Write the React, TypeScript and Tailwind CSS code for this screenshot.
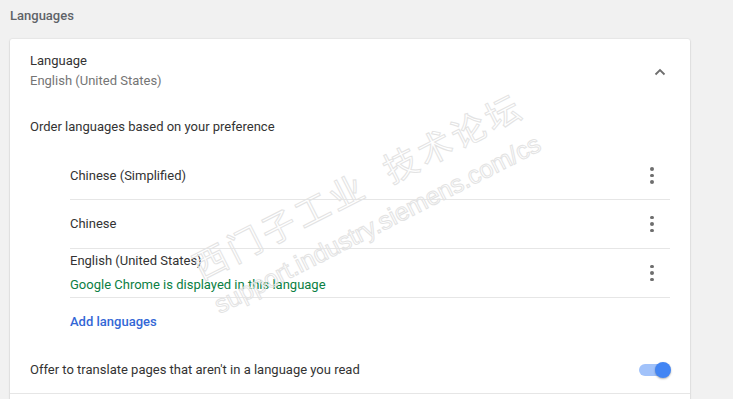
import React from "react";

function Kebab() {
  return (
    <div className="flex flex-col items-center gap-[3px] w-[6px]">
      <span className="block w-[3.5px] h-[3.5px] rounded-full bg-[#6e6e6e]" />
      <span className="block w-[3.5px] h-[3.5px] rounded-full bg-[#6e6e6e]" />
      <span className="block w-[3.5px] h-[3.5px] rounded-full bg-[#6e6e6e]" />
    </div>
  );
}

export default function App() {
  return (
    <div className="relative w-[733px] h-[399px] overflow-hidden bg-[#f1f1f1] font-['Roboto','Liberation_Sans',sans-serif] text-[13px]">
      <div className="pl-[10px] pt-[6px] h-[39px] leading-[20px] text-[#5f6368] font-medium">Languages</div>
      <div className="ml-[10px] w-[680px] bg-white rounded-[2px] shadow-[0_0_2px_rgba(0,0,0,0.14),0_1px_2px_rgba(0,0,0,0.12)] h-[400px]">
        <div className="flex items-center pl-[20px] pr-[24px] pt-[12px]">
          <div className="flex-1">
            <div className="leading-[20px] text-[#333]">Language</div>
            <div className="leading-[20px] text-[#757575]">English (United States)</div>
          </div>
          <svg width="12" height="8" viewBox="0 0 12 8" className="mt-[1px]">
            <path d="M1.5 6.5 L6 2 L10.5 6.5" fill="none" stroke="#6e6e6e" strokeWidth="1.8" />
          </svg>
        </div>
        <div className="pl-[20px] mt-[26px] leading-[20px] text-[#333]">Order languages based on your preference</div>
        <div className="ml-[60px] mr-[20px] mt-[15px]">
          <div className="flex items-center h-[48px] border-b border-[#e6e6e6] text-[#333]">
            <div className="flex-1">Chinese (Simplified)</div>
            <div className="mr-[15px]"><Kebab /></div>
          </div>
          <div className="flex items-center h-[49px] border-b border-[#e6e6e6] text-[#333]">
            <div className="flex-1">Chinese</div>
            <div className="mr-[15px]"><Kebab /></div>
          </div>
          <div className="flex items-center h-[49px] border-b border-[#e6e6e6]">
            <div className="flex-1">
              <div className="leading-[24px] text-[#333]">English (United States)</div>
              <div className="leading-[24px] text-[#0b8043]">Google Chrome is displayed in this language</div>
            </div>
            <div className="mr-[15px]"><Kebab /></div>
          </div>
          <div className="flex items-center h-[48px] text-[#3367d6] font-medium">Add languages</div>
        </div>
        <div className="flex items-center h-[48px] pl-[20px] pr-[20px] border-b border-[#e6e6e6] text-[#333]">
          <div className="flex-1">Offer to translate pages that aren't in a language you read</div>
          <div className="relative w-[32px] h-[16px] mr-[-1px]">
            <div className="absolute left-[0px] top-[2px] w-[28px] h-[12px] rounded-full bg-[#a1c2fa]" />
            <div className="absolute right-[0px] top-[0px] w-[16px] h-[16px] rounded-full bg-[#4285f4] shadow-[0_1px_2px_rgba(0,0,0,0.3)]" />
          </div>
        </div>
      </div>
      <div className="pointer-events-none absolute left-[195px] top-[251px] origin-left -rotate-[27deg] text-[34px] leading-none font-['Noto_Sans_CJK_SC',sans-serif] text-transparent [-webkit-text-stroke:1px_#e3e3e3] tracking-[4px] whitespace-nowrap">
        西门子工业&nbsp;&nbsp;技术论坛
      </div>
      <div className="pointer-events-none absolute left-[216px] top-[294px] origin-left -rotate-[27deg] text-[25px] leading-none font-['Liberation_Sans',sans-serif] text-transparent [-webkit-text-stroke:1px_#e3e3e3] whitespace-nowrap">
        support.industry.siemens.com/cs
      </div>
    </div>
  );
}
